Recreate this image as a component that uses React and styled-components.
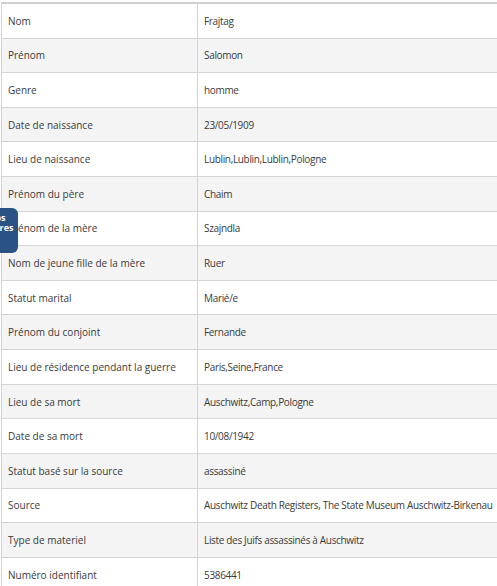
import React from "react";
import styled, { createGlobalStyle } from "styled-components";

const Global = createGlobalStyle`
  html, body { margin: 0; padding: 0; background: #ffffff; }
  body { font-family: "Open Sans", "Noto Sans", sans-serif; color: #333; overflow: hidden; }
`;

const Page = styled.div`
  position: relative;
  padding: 2px 0 0 1px;
  width: 560px;
`;

const Table = styled.div`
  display: grid;
  grid-template-columns: 196px 1fr;
  border-top: 2px solid #cfcfcf;
  border-left: 1px solid #d4d4d4;
`;

const Cell = styled.div`
  height: 34.62px;
  box-sizing: border-box;
  display: flex;
  align-items: center;
  padding-left: 6px;
  border-bottom: 1px solid #d4d4d4;
  border-right: ${(p) => (p.$label ? "1px solid #d4d4d4" : "none")};
  background: ${(p) => (p.$alt ? "#f4f4f4" : "#ffffff")};
  font-size: 10px;
  letter-spacing: ${(p) => (p.$label ? "0" : "-0.33px")};
  color: #3a3a3a;
  white-space: nowrap;
`;

const SideTab = styled.div`
  position: absolute;
  left: -38px;
  top: 208px;
  width: 56px;
  height: 45px;
  background: #2b5284;
  border-radius: 0 6px 6px 0;
  color: #fff;
  font-weight: 700;
  font-size: 9px;
  line-height: 10px;
  display: flex;
  flex-direction: column;
  align-items: center;
  padding-top: 5px;
  box-sizing: border-box;
`;

const rows = [
  ["Nom", "Frajtag"],
  ["Prénom", "Salomon"],
  ["Genre", "homme"],
  ["Date de naissance", "23/05/1909"],
  ["Lieu de naissance", "Lublin,Lublin,Lublin,Pologne"],
  ["Prénom du père", "Chaim"],
  ["Prénom de la mère", "Szajndla"],
  ["Nom de jeune fille de la mère", "Ruer"],
  ["Statut marital", "Marié/e"],
  ["Prénom du conjoint", "Fernande"],
  ["Lieu de résidence pendant la guerre", "Paris,Seine,France"],
  ["Lieu de sa mort", "Auschwitz,Camp,Pologne"],
  ["Date de sa mort", "10/08/1942"],
  ["Statut basé sur la source", "assassiné"],
  ["Source", "Auschwitz Death Registers, The State Museum Auschwitz-Birkenau"],
  ["Type de materiel", "Liste des Juifs assassinés à Auschwitz"],
  ["Numéro identifiant", "5386441"],
];

export default function App() {
  return (
    <Page>
      <Global />
      <Table>
        {rows.map(([k, v], i) => (
          <React.Fragment key={k}>
            <Cell $label $alt={i % 2 === 1}>{k}</Cell>
            <Cell $alt={i % 2 === 1}>{v}</Cell>
          </React.Fragment>
        ))}
      </Table>
      <SideTab>
        <span>Photos</span>
        <span>Itinéraires</span>
      </SideTab>
    </Page>
  );
}
